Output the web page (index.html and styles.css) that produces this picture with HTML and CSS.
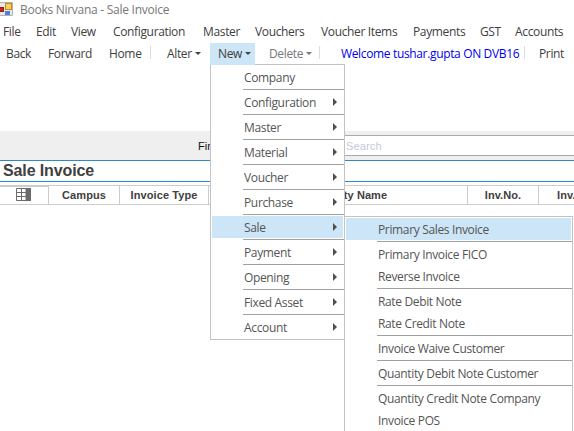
FILE: index.html
```html
<!DOCTYPE html>
<html lang="en">
<head>
<meta charset="utf-8">
<title>Books Nirvana - Sale Invoice</title>
<link rel="stylesheet" href="styles.css">
</head>
<body>
<header class="titlebar">
  <svg class="app-icon" width="13" height="16" viewBox="0 0 13 16">
    <path d="M0 2.5H12.5V15.5H0" fill="#e8e8ea" stroke="#b4b4b8"/>
    <rect x="-1.5" y="7.5" width="5" height="4" fill="#c8281c" stroke="#8e2018"/>
    <rect x="5.5" y="3.5" width="6" height="6" fill="#fad05a" stroke="#c08a1c"/>
    <rect x="5" y="11" width="5" height="4" fill="#4c80dc"/>
  </svg>
  <span>Books Nirvana - Sale Invoice</span>
</header>
<nav class="menubar">
  <span>File</span><span>Edit</span><span>View</span><span>Configuration</span><span>Master</span><span>Vouchers</span><span>Voucher Items</span><span>Payments</span><span>GST</span><span>Accounts</span>
</nav>
<div class="toolbar">
  <span class="tool">Back</span>
  <span class="tool">Forward</span>
  <span class="tool">Home</span>
  <span class="tool ruled">Alter<i class="caret"></i></span>
  <div class="tool open">New<i class="caret"></i>
    <div class="menu main-menu">
      <div class="item">Company</div>
      <div class="item sep more">Configuration</div>
      <div class="item sep more">Master</div>
      <div class="item sep more">Material</div>
      <div class="item sep more">Voucher</div>
      <div class="item sep more">Purchase</div>
      <div class="item sep more active">Sale
        <div class="menu sub-menu">
          <div class="item active">Primary Sales Invoice</div>
          <div class="item sep">Primary Invoice FICO</div>
          <div class="item">Reverse Invoice</div>
          <div class="item sep">Rate Debit Note</div>
          <div class="item">Rate Credit Note</div>
          <div class="item sep">Invoice Waive Customer</div>
          <div class="item sep">Quantity Debit Note Customer</div>
          <div class="item sep">Quantity Credit Note Company</div>
          <div class="item">Invoice POS</div>
        </div>
      </div>
      <div class="item sep more">Payment</div>
      <div class="item sep more">Opening</div>
      <div class="item sep more">Fixed Asset</div>
      <div class="item sep more">Account</div>
    </div>
  </div>
  <span class="tool disabled">Delete<i class="caret"></i></span>
  <span class="tool ruled welcome">Welcome tushar.gupta ON DVB16</span>
  <span class="tool ruled print">Print</span>
</div>
<main>
  <div class="findbar"><label>Find</label><div class="search">Search</div></div>
  <h1>Sale Invoice</h1>
  <div class="grid-head">
    <div class="chooser"><svg width="15" height="13" viewBox="0 0 15 13"><path d="M.5 .5H10V12.5H.5ZM5.5 .5V12.5M.5 4.5H10M.5 8.5H10" fill="none" stroke="#6b6b6b"/><path d="M10 0h5v13h-5z" fill="#6b6b6b"/></svg></div>
    <div>Campus</div><div>Invoice Type</div><div class="party">Party Name</div><div>Inv.No.</div><div class="last">Inv.</div>
  </div>
</main>
</body>
</html>
```
FILE: styles.css
```css
* { box-sizing: border-box; }
body { margin: 0; width: 574px; height: 431px; overflow: hidden; background: #fff; color: #404040; font: 12px/22px "Open Sans", "Noto Sans", sans-serif; letter-spacing: -0.35px; white-space: nowrap; }
.titlebar { display: flex; height: 21px; line-height: 20px; color: #777; letter-spacing: -0.27px; }
.titlebar span { margin-left: 7px; }
.menubar { display: grid; grid-template-columns: 33px 35px 42px 90px 52px 66px 92px 67px 35px 59px; padding-left: 3px; height: 22px; }
.toolbar { display: grid; grid-template-columns: 42px 61px 47px 60px 45px 64px 205px 50px; height: 22px; }
.tool { position: relative; padding-left: 6px; }
.tool.ruled { padding-left: 17px; }
.tool.ruled::before { content: ""; position: absolute; left: 0; top: 3px; width: 1px; height: 13px; background: #ddd; }
.tool.welcome { color: #0000f0; padding-left: 22px; }
.tool.print { padding-left: 15px; }
.tool.open { background: #cce5f7; padding-left: 8px; }
.tool.disabled { color: #777; padding-left: 14px; }
.caret { display: inline-block; margin-left: 3px; vertical-align: 3px; border: 3px solid transparent; border-top-color: currentColor; border-bottom: 0; }
.menu { position: absolute; z-index: 2; padding: 1px 0 0 1px; background: #fff; border: 1px solid #c3c3c3; color: #555; }
.main-menu { left: 0; top: 21px; width: 135px; height: 276px; }
.main-menu::before { content: ""; position: absolute; left: -1px; top: -1px; width: 45px; height: 1px; background: #cce5f7; }
.sub-menu { left: 132px; top: 0; width: 229px; height: 230px; }
.item { position: relative; height: 22px; margin-right: 1px; padding-left: 32px; line-height: 23px; }
.item.sep { margin-top: 3px; }
.item.sep::before { content: ""; position: absolute; left: 31px; right: -1px; top: -2px; height: 1px; background: #a0a0a0; }
.item.active { background: #cce5f7; }
.item.more::after { content: ""; position: absolute; left: 121px; top: 7px; border: 4px solid transparent; border-left-color: #505050; border-right: 0; }
main { font-family: "Liberation Sans", sans-serif; letter-spacing: 0; padding-top: 66px; }
.findbar { display: flex; height: 29px; padding: 4px 0; background: #efefef; color: #111; }
.findbar label { width: 136px; margin-left: 198px; font-size: 11px; }
.search { flex: 1; padding-left: 11px; border: 1px solid #aaa; border-right: 0; background: #fff; color: #bdcbdc; font-size: 11px; line-height: 21px; letter-spacing: 0.15px; }
h1 { margin: 0; height: 22px; padding-left: 3px; border: solid #2e86cc; border-width: 1px 0; font-size: 16px; line-height: 19px; letter-spacing: -0.12px; }
.grid-head { display: grid; grid-template-columns: 49px 71px 89px 259px 71px 35px; margin-top: 3px; height: 20px; border: solid #ccc; border-width: 1px 0; font-size: 11px; font-weight: bold; line-height: 19px; letter-spacing: 0.08px; text-align: center; }
.grid-head div { border-right: 1px solid #ccc; }
.grid-head .chooser { padding: 1px 0 0 16px; border-top: 1px solid #ccc; line-height: 0; text-align: left; }
.grid-head .party { padding-left: 37px; }
.grid-head .last { border: 0; padding-left: 18px; text-align: left; }
```
